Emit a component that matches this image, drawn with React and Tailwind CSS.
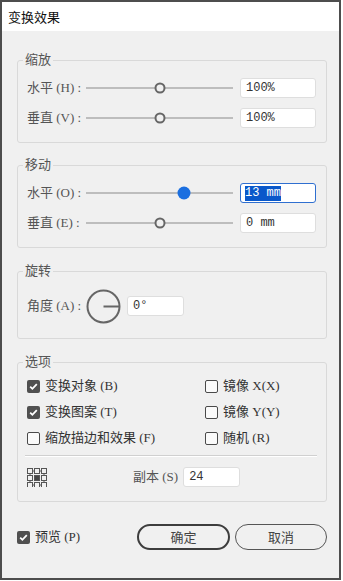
import React from "react";

const serif = "font-['Liberation_Serif','Noto_Sans_CJK_SC',serif]";
const mono = "font-['Liberation_Mono','Noto_Sans_CJK_SC',monospace]";
const sans = "font-['Noto_Sans_CJK_SC',sans-serif]";

const Check = ({ checked }) =>
  checked ? (
    <span className="w-[13px] h-[13px] rounded-[2px] bg-[#505050] flex items-center justify-center shrink-0">
      <svg width="11" height="11" viewBox="0 0 11 11">
        <path d="M2.2 5.6 L4.4 7.8 L8.8 3.2" fill="none" stroke="#fff" strokeWidth="1.8" />
      </svg>
    </span>
  ) : (
    <span className="w-[13px] h-[13px] rounded-[2px] border border-[#4a4a4a] bg-[#fafafa] shrink-0" />
  );

const Option = ({ checked, label }) => (
  <div className="flex items-center h-[20px]">
    <Check checked={checked} />
    <span className={`ml-[5px] text-[13px] text-[#333] ${serif}`}>{label}</span>
  </div>
);

const Group = ({ title, className = "", children }) => (
  <fieldset className={`w-[310px] border border-[#d9d9d9] rounded-[3px] pl-[9px] pr-[10px] ${className}`}>
    <legend className={`ml-[-4px] px-[2px] text-[13px] leading-[16px] text-[#555] ${serif}`}>{title}</legend>
    {children}
  </fieldset>
);

const Field = ({ value, focused }) =>
  focused ? (
    <div className="w-[76px] h-[20px] bg-white border border-[#2f6fd0] rounded-[3px] flex items-center pl-[4px]">
      <span className={`bg-[#0a58ca] text-white text-[12px] leading-[15px] ${mono}`}>{value}</span>
    </div>
  ) : (
    <div className={`w-[76px] h-[20px] bg-white border border-[#dedede] rounded-[3px] flex items-center pl-[5px] text-[12px] text-[#333] ${mono}`}>
      {value}
    </div>
  );

const SliderRow = ({ label, pos, active, value, focused }) => (
  <div className="flex items-center h-[20px]">
    <span className={`w-[59px] text-[13px] text-[#555] whitespace-nowrap ${serif}`}>{label}</span>
    <div className="relative w-[147px] h-[20px] flex items-center">
      <div className="w-full h-[2px] bg-[#bdbdbd]" />
      {active ? (
        <span className={`absolute top-1/2 -translate-y-1/2 -translate-x-1/2 w-[13px] h-[13px] rounded-full bg-[#1b6fe0] ${pos}`} />
      ) : (
        <span className={`absolute top-1/2 -translate-y-1/2 -translate-x-1/2 w-[11px] h-[11px] rounded-full border-[2.5px] border-[#666] bg-[#f0f0f0] ${pos}`} />
      )}
    </div>
    <div className="ml-[7px]">
      <Field value={value} focused={focused} />
    </div>
  </div>
);

const GridIcon = () => (
  <svg width="20" height="19" viewBox="0 0 20 19">
    {[0, 7, 14].map((y) =>
      [0, 7, 14].map((x) => (
        <rect
          key={`${x}-${y}`}
          x={x + 0.5}
          y={y + 0.5}
          width="5"
          height="5"
          fill={x === 7 && y === 7 ? "#444" : "none"}
          stroke="#555"
          strokeWidth="1"
        />
      ))
    )}
    <path d="M5.5 3 H7.5 M12.5 3 H14.5 M5.5 17 H7.5 M12.5 17 H14.5 M3 5.5 V7.5 M3 12.5 V14.5 M17 5.5 V7.5 M17 12.5 V14.5" stroke="#555" strokeWidth="1" />
  </svg>
);

export default function App() {
  return (
    <div className="w-[343px] h-[581px] bg-white">
      <div className="w-[341px] h-[580px] border-2 border-[#4d4d4d] bg-[#f0f0f0] flex flex-col">
        {/* Title */}
        <div className={`h-[29px] bg-white flex items-center pl-[6px] text-[13px] text-[#111] ${sans}`}>
          变换效果
        </div>

        <div className="pl-[15px] flex flex-col">
          {/* Scale */}
          <Group title="缩放" className="mt-[21px] pt-[10px] pb-[14px]">
            <div className="flex flex-col gap-[10px]">
              <SliderRow label="水平 (H) :" pos="left-[50%]" value="100%" />
              <SliderRow label="垂直 (V) :" pos="left-[50%]" value="100%" />
            </div>
          </Group>

          {/* Move */}
          <Group title="移动" className="mt-[14px] pt-[10px] pb-[14px]">
            <div className="flex flex-col gap-[10px]">
              <SliderRow label="水平 (O) :" pos="left-[67%]" active value="13 mm" focused />
              <SliderRow label="垂直 (E) :" pos="left-[50%]" value="0 mm" />
            </div>
          </Group>

          {/* Rotate */}
          <Group title="旋转" className="mt-[15px] pt-[10px] pb-[15px]">
            <div className="flex items-center h-[34px]">
              <span className={`w-[59px] text-[13px] text-[#555] whitespace-nowrap ${serif}`}>角度 (A) :</span>
              <svg width="35" height="35" viewBox="0 0 35 35">
                <circle cx="17.5" cy="17.5" r="16" fill="none" stroke="#666" strokeWidth="2" />
                <path d="M17.5 17.5 H33.5" stroke="#666" strokeWidth="2" />
              </svg>
              <div className={`ml-[6px] w-[57px] h-[20px] bg-white border border-[#dedede] rounded-[3px] flex items-center pl-[5px] text-[12px] text-[#333] ${mono}`}>
                0°
              </div>
            </div>
          </Group>

          {/* Options */}
          <Group title="选项" className="mt-[15px] pt-[6px] pb-[14px]">
            <div className="grid grid-cols-[178px_1fr] gap-y-[6px]">
              <Option checked label="变换对象 (B)" />
              <Option label="镜像 X(X)" />
              <Option checked label="变换图案 (T)" />
              <Option label="镜像 Y(Y)" />
              <Option label="缩放描边和效果 (F)" />
              <Option label="随机 (R)" />
            </div>
            <div className="mt-[7px] mr-[-1px] ml-[-2px] h-[2px] border-t border-[#d0d0d0] border-b border-b-white" />
            <div className="mt-[10px] flex items-center h-[20px]">
              <GridIcon />
              <span className={`ml-[86px] text-[13px] text-[#555] ${serif}`}>副本 (S)</span>
              <div className={`ml-[5px] w-[57px] h-[20px] bg-white border border-[#dedede] rounded-[3px] flex items-center pl-[5px] text-[12px] text-[#333] ${mono}`}>
                24
              </div>
            </div>
          </Group>

          {/* Footer */}
          <div className="mt-[22px] w-[310px] flex items-center">
            <Check checked />
            <span className={`ml-[5px] text-[13px] text-[#333] ${serif}`}>预览 (P)</span>
            <div className="ml-auto flex gap-[5px]">
              <button className={`w-[93px] h-[26px] rounded-full border-2 border-[#3d3d3d] text-[13px] text-[#444] ${sans}`}>
                确定
              </button>
              <button className={`w-[92px] h-[26px] rounded-full border border-[#555] text-[13px] text-[#444] ${sans}`}>
                取消
              </button>
            </div>
          </div>
        </div>
      </div>
    </div>
  );
}
